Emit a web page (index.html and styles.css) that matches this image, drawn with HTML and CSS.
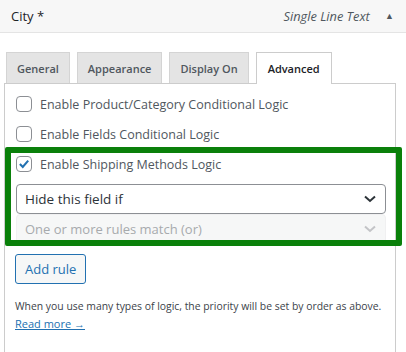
FILE: index.html
```html
<!DOCTYPE html>
<html lang="en">
<head>
    <meta charset="UTF-8">
    <meta name="viewport" content="width=device-width, initial-scale=1.0">
    <title>City field - Advanced</title>
    <link rel="stylesheet" href="styles.css">
</head>
<body>

    <div class="field-head">
        <span class="field-name">City *</span>
        <span class="field-type">Single Line Text <span class="toggle">&#9650;</span></span>
    </div>

    <div class="field-body">
        <div class="tabs">
            <div class="tab">General</div>
            <div class="tab">Appearance</div>
            <div class="tab">Display On</div>
            <div class="tab active">Advanced</div>
        </div>

        <div class="panel">
            <label class="opt"><span class="box"></span> Enable Product/Category Conditional Logic</label>
            <label class="opt"><span class="box"></span> Enable Fields Conditional Logic</label>
            <label class="opt"><span class="box checked"><svg viewBox="0 0 16 16" width="14" height="14"><path d="M3.3 8 L6.6 11.3 L12.8 4.2" fill="none" stroke="#2271b1" stroke-width="2.4"/></svg></span> Enable Shipping Methods Logic</label>

            <div class="select">
                <span>Hide this field if</span>
                <svg viewBox="0 0 12 8" width="12" height="8"><path d="M1 1.5 L6 6 L11 1.5" fill="none" stroke="#2c3338" stroke-width="2"/></svg>
            </div>
            <div class="select disabled">
                <span>One or more rules match (or)</span>
                <svg viewBox="0 0 12 8" width="12" height="8"><path d="M1 1.5 L6 6 L11 1.5" fill="none" stroke="#c3c4c7" stroke-width="2"/></svg>
            </div>

            <button class="add-btn">Add rule</button>

            <p class="note">When you use many types of logic, the priority will be set by order as above.<br>
                <a href="#">Read more &rarr;</a></p>
        </div>
    </div>

    <!-- highlight frame drawn on top of the screenshot -->
    <div class="highlight"></div>

</body>
</html>
```

FILE: styles.css
```css
body {
    margin: 0;
    font-family: 'Open Sans', 'Noto Sans', sans-serif;
    color: #1d2327;
    background: #fff;
    position: relative;
}
.field-head {
    height: 33px;
    box-sizing: border-box;
    background: #f7f7f7;
    border-bottom: 1px solid #e4e4e4;
    display: flex;
    align-items: center;
    justify-content: space-between;
    padding: 0 12px 0 11px;
    font-size: 13px;
}
.field-type {
    font-style: italic;
    color: #50575e;
    font-size: 12.8px;
}
.toggle {
    font-style: normal;
    font-size: 9px;
    margin-left: 12px;
    color: #50575e;
    position: relative;
    top: -2px;
}
.field-body {
    padding: 19px 10px 0 4px;
}
.tabs {
    display: flex;
    gap: 7px;
    padding-left: 2px;
    height: 31px;
    position: relative;
    z-index: 1;
}
.tab {
    box-sizing: border-box;
    height: 31px;
    padding: 0 10px;
    background: #e4e4e4;
    border: 1px solid #d4d4d4;
    border-bottom: none;
    font-size: 11px;
    font-weight: 600;
    color: #50575e;
    display: flex;
    align-items: center;
}
.tab.active {
    background: #fff;
    color: #1d2327;
    height: 32px;
    padding: 0 11px;
    border-color: #ccc;
}
.panel {
    border: 1px solid #ccc;
    padding: 10px 10px 19px 10px;
    font-size: 12.5px;
    color: #50575e;
}
.opt {
    display: flex;
    align-items: center;
    gap: 8px;
    height: 20px;
    margin-bottom: 10px;
}
.box {
    width: 16px;
    height: 16px;
    box-sizing: border-box;
    border: 1px solid #8c8f94;
    border-radius: 4px;
    background: #fff;
    display: flex;
    align-items: center;
    justify-content: center;
    margin-left: 1px;
}
.select {
    box-sizing: border-box;
    height: 30px;
    border: 1px solid #8c8f94;
    border-radius: 4px;
    display: flex;
    align-items: center;
    justify-content: space-between;
    padding: 0 9px 0 8px;
    font-size: 13.5px;
    color: #2c3338;
    margin-left: 1px;
    margin-right: -1px;
}
.select.disabled {
    background: #f6f7f7;
    border-color: #f0f0f1;
    color: #a7aaad;
    font-size: 13px;
}
.add-btn {
    margin-top: 10px;
    height: 30px;
    padding: 0 9px;
    font-family: inherit;
    font-size: 13px;
    color: #2271b1;
    background: #f6f7f7;
    border: 1px solid #2271b1;
    border-radius: 3px;
}
.note {
    margin: 14px 0 0 0;
    line-height: 17px;
    font-size: 10.4px;
    color: #3c434a;
}
.note a {
    color: #2271b1;
    font-size: 11px;
}
.highlight {
    position: absolute;
    left: 5px;
    top: 147px;
    width: 397px;
    height: 99px;
    box-sizing: border-box;
    border: 6px solid #0a800a;
    border-radius: 2px;
}
```
